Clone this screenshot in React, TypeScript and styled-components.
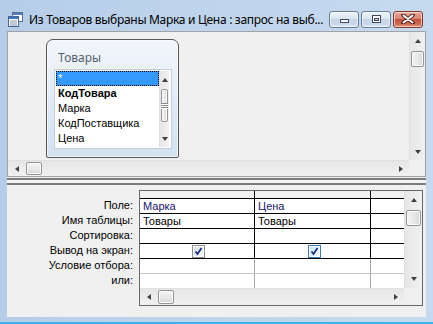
import React from "react";
import styled, { createGlobalStyle } from "styled-components";

const GlobalStyle = createGlobalStyle`
  html, body { margin: 0; padding: 0; }
  body { width: 433px; height: 324px; overflow: hidden; background: #bcd3ec; }
`;

const UI = `"Liberation Sans", Arial, sans-serif`;
const SEGOE = `"Noto Sans", "Open Sans", sans-serif`;

const Frame = styled.div`
  width: 433px;
  height: 324px;
  box-sizing: border-box;
  display: flex;
  flex-direction: column;
  padding: 0 7px 5px 7px;
  background: linear-gradient(90deg, #b6cde9 0%, #bed4ec 45%, #c6daef 100%);
  border-bottom: 2px solid #39b4e4;
`;

const TitleBar = styled.div`
  height: 31px;
  flex: 0 0 31px;
  display: flex;
  align-items: center;
  padding: 7px 3px 0 1px;
  box-sizing: border-box;
`;

const TitleText = styled.div`
  flex: 1;
  min-width: 0;
  margin-left: 6px;
  font: 12px ${SEGOE};
  letter-spacing: -0.3px;
  color: #000;
  white-space: nowrap;
  overflow: hidden;
`;

const CaptionGroup = styled.div`
  flex: 0 0 auto;
  display: flex;
  gap: 4px;
`;

const CaptionBtn = styled.div<{ $close?: boolean }>`
  flex: 0 0 30px;
  width: 30px;
  height: 17px;
  box-sizing: border-box;
  border-radius: 3px;
  display: flex;
  align-items: center;
  justify-content: center;
  border: 1px solid ${(p) => (p.$close ? "#84382f" : "#6a7d95")};
  box-shadow: inset 0 0 0 1px rgba(255, 255, 255, 0.55);
  background: ${(p) =>
    p.$close
      ? "linear-gradient(180deg, #e9a999 0%, #d98571 45%, #c5533c 50%, #cf6a52 80%, #e0947c 100%)"
      : "linear-gradient(180deg, #eef3f9 0%, #dbe5f1 45%, #c5d4e6 50%, #cbd9ea 80%, #dce7f3 100%)"};
  & + & { margin-left: ${(p) => (p.$close ? "-2px" : "0")}; }
`;

const Client = styled.div`
  flex: 1;
  display: flex;
  flex-direction: column;
  background: #f0f0f0;
`;

const UpperPane = styled.div`
  height: 146px;
  box-sizing: border-box;
  border: 1px solid #a3a3a3;
  display: grid;
  grid-template-columns: 1fr 16px;
  grid-template-rows: 1fr 16px;
  background: #f0f0f0;
`;

const Canvas = styled.div`
  padding: 7px 0 0 38px;
`;

const Corner = styled.div`
  background: #f0f0f0;
`;

const Splitter = styled.div`
  margin-top: 1px;
  height: 7px;
  box-sizing: border-box;
  border-top: 2px solid #7b7b7b;
  border-bottom: 2px solid #7b7b7b;
  background: #f4f4f4;
`;

const LowerPane = styled.div`
  flex: 1;
  display: flex;
  padding-top: 5px;
`;

const Labels = styled.div`
  width: 132px;
  box-sizing: border-box;
  padding: 9px 6px 0 0;
  display: flex;
  flex-direction: column;
`;

const Label = styled.div`
  height: 15px;
  line-height: 15px;
  text-align: right;
  font: 11px ${UI};
  color: #000;
  white-space: nowrap;
`;

const GridBox = styled.div`
  width: 284px;
  height: 116px;
  box-sizing: border-box;
  border: 1px solid #686868;
  display: grid;
  grid-template-columns: 264px 18px;
  grid-template-rows: 97px 17px;
  background: #f0f0f0;
`;

const Cells = styled.div`
  display: grid;
  grid-template-columns: 115px 116px 33px;
  grid-template-rows: 8px repeat(5, 15px) 14px;
  background: #fff;
`;

const Cell = styled.div<{ $head?: boolean; $dim?: boolean; $last?: boolean; $bottom?: boolean; $field?: boolean; $center?: boolean }>`
  box-sizing: border-box;
  background: ${(p) => (p.$head ? "#f0f0f0" : "#fff")};
  border-right: ${(p) => (p.$last ? "none" : `1px solid ${p.$dim ? "#a8a8a8" : "#000"}`)};
  border-bottom: ${(p) => (p.$bottom ? "none" : `1px solid ${p.$dim ? "#c4c4c4" : "#000"}`)};
  font: 11px ${UI};
  line-height: 14px;
  padding-left: 3px;
  color: ${(p) => (p.$field ? "#14146e" : "#000")};
  display: flex;
  align-items: center;
  justify-content: ${(p) => (p.$center ? "center" : "flex-start")};
  white-space: nowrap;
  overflow: hidden;
`;

const TableBox = styled.div`
  width: 133px;
  height: 119px;
  box-sizing: border-box;
  border: 1px solid #575757;
  border-radius: 7px 7px 2px 2px;
  box-shadow: inset 0 0 0 1px rgba(255, 255, 255, 0.6);
  background: linear-gradient(180deg, #f2f6fb 0%, #e4edf7 40%, #d3e1f1 100%);
  display: flex;
  flex-direction: column;
`;

const TableTitle = styled.div`
  height: 29px;
  box-sizing: border-box;
  padding: 10px 0 0 11px;
  font: 12px ${SEGOE};
  line-height: 16px;
  color: #58606b;
`;

const ListBox = styled.div`
  margin-left: 7px;
  width: 118px;
  height: 80px;
  box-sizing: border-box;
  border: 1px solid #c3cfdd;
  padding: 1px 2px 1px 1px;
  background: #fff;
  display: flex;
`;

const Items = styled.div`
  flex: 1;
  display: flex;
  flex-direction: column;
`;

const Item = styled.div<{ $selected?: boolean; $bold?: boolean }>`
  height: 15px;
  box-sizing: border-box;
  line-height: 13px;
  padding-left: 1px;
  font: ${(p) => (p.$bold ? "bold " : "")}11px ${UI};
  color: ${(p) => (p.$selected ? "#fff" : "#000")};
  background: ${(p) => (p.$selected ? "#3399ff" : "transparent")};
  border: 1px ${(p) => (p.$selected ? "dotted #000" : "solid transparent")};
  white-space: nowrap;
  overflow: hidden;
`;

/* scrollbars */

const Scroll = styled.div<{ $vertical?: boolean }>`
  display: flex;
  flex-direction: ${(p) => (p.$vertical ? "column" : "row")};
  background: ${(p) => (p.$vertical ? "linear-gradient(90deg, #e6e6e6, #f1f1f1)" : "linear-gradient(180deg, #e6e6e6, #f1f1f1)")};
  border-${(p) => (p.$vertical ? "left" : "top")}: 1px solid #e0e0e0;
  overflow: hidden;
`;

const ArrowBox = styled.div<{ $vertical?: boolean; $size: number }>`
  flex: 0 0 ${(p) => p.$size}px;
  display: flex;
  align-items: center;
  justify-content: center;
`;

const Tri = styled.span<{ $dir: "up" | "down" | "left" | "right" }>`
  width: 0;
  height: 0;
  border-style: solid;
  border-color: transparent;
  ${(p) =>
    p.$dir === "up"
      ? "border-width: 0 3.5px 4px 3.5px; border-bottom-color: #404040;"
      : p.$dir === "down"
      ? "border-width: 4px 3.5px 0 3.5px; border-top-color: #404040;"
      : p.$dir === "left"
      ? "border-width: 3.5px 4px 3.5px 0; border-right-color: #404040;"
      : "border-width: 3.5px 0 3.5px 4px; border-left-color: #404040;"}
`;

const Track = styled.div<{ $vertical?: boolean }>`
  flex: 1;
  display: flex;
  flex-direction: ${(p) => (p.$vertical ? "column" : "row")};
  align-items: center;
`;

const Thumb = styled.div<{ $vertical?: boolean; $offset: number; $length: number }>`
  box-sizing: border-box;
  ${(p) =>
    p.$vertical
      ? `margin-top: ${p.$offset}px; height: ${p.$length}px; width: calc(100% - 2px);`
      : `margin-left: ${p.$offset}px; width: ${p.$length}px; height: calc(100% - 2px);`}
  border: 1px solid #959595;
  border-radius: 2px;
  box-shadow: inset 0 0 0 1px #fafafa;
  background: ${(p) =>
    p.$vertical
      ? "linear-gradient(90deg, #f3f3f3 0%, #e9e9e9 50%, #d8d8d8 100%)"
      : "linear-gradient(180deg, #f3f3f3 0%, #e9e9e9 50%, #d8d8d8 100%)"};
  display: flex;
  flex-direction: column;
  align-items: center;
  justify-content: center;
  gap: 1px;
`;

const Grip = styled.span`
  width: 7px;
  height: 1px;
  background: #8a8a8a;
  box-shadow: 0 1px 0 #fff;
`;

type ScrollBarProps = {
  vertical?: boolean;
  arrow: number;
  offset: number;
  length: number;
  grip?: boolean;
};

const ScrollBar = ({ vertical, arrow, offset, length, grip }: ScrollBarProps) => (
  <Scroll $vertical={vertical}>
    <ArrowBox $vertical={vertical} $size={arrow}>
      <Tri $dir={vertical ? "up" : "left"} />
    </ArrowBox>
    <Track $vertical={vertical}>
      <Thumb $vertical={vertical} $offset={offset} $length={length}>
        {grip && (
          <>
            <Grip />
            <Grip />
            <Grip />
          </>
        )}
      </Thumb>
    </Track>
    <ArrowBox $vertical={vertical} $size={arrow}>
      <Tri $dir={vertical ? "down" : "right"} />
    </ArrowBox>
  </Scroll>
);

const QueryIcon = () => (
  <svg width="15" height="15" viewBox="0 0 15 15" style={{ flex: "0 0 15px" }}>
    <rect x="4.5" y="0.5" width="10" height="9" fill="#fff" stroke="#5a6f8e" />
    <rect x="5" y="1" width="9" height="2" fill="#4f7fc0" />
    <rect x="0.5" y="4.5" width="10" height="10" fill="#fff" stroke="#4a6690" />
    <rect x="1" y="5" width="9" height="2" fill="#3f73bd" />
    <line x1="2" y1="9" x2="9" y2="9" stroke="#7d93b3" />
    <line x1="2" y1="11" x2="9" y2="11" stroke="#7d93b3" />
    <line x1="2" y1="13" x2="9" y2="13" stroke="#7d93b3" />
  </svg>
);

const MinGlyph = () => (
  <svg width="11" height="9" viewBox="0 0 11 9">
    <rect x="1.5" y="4.5" width="8" height="3" fill="#fff" stroke="#3d4a5c" />
  </svg>
);

const RestoreGlyph = () => (
  <svg width="11" height="9" viewBox="0 0 11 9">
    <rect x="1.5" y="0.5" width="8" height="7" fill="#fff" stroke="#3d4a5c" />
    <rect x="3.5" y="3.5" width="4" height="2" fill="#d3dded" stroke="#3d4a5c" />
  </svg>
);

const CloseGlyph = () => (
  <svg width="14" height="10" viewBox="0 0 14 10">
    <path d="M2 1 L12 9 M12 1 L2 9" stroke="#4a1c16" strokeWidth="3.6" strokeLinecap="round" />
    <path d="M2.5 1.5 L11.5 8.5 M11.5 1.5 L2.5 8.5" stroke="#fff" strokeWidth="2" strokeLinecap="round" />
  </svg>
);

const Check = ({ focused }: { focused?: boolean }) => (
  <svg width="13" height="13" viewBox="0 0 13 13">
    <defs>
      <linearGradient id={focused ? "cbf" : "cb"} x1="0" y1="0" x2="1" y2="1">
        <stop offset="0" stopColor={focused ? "#c9e3f7" : "#d6dde6"} />
        <stop offset="1" stopColor={focused ? "#f2f8fd" : "#f6f7f9"} />
      </linearGradient>
    </defs>
    <rect x="0.5" y="0.5" width="12" height="12" fill="#fff" stroke={focused ? "#3c7fb1" : "#8e8f8f"} />
    <rect x="2" y="2" width="9" height="9" fill={`url(#${focused ? "cbf" : "cb"})`} />
    <path d="M3.5 6.5 L5.5 9 L9.5 3" fill="none" stroke="#1f2f86" strokeWidth="1.8" />
  </svg>
);

const fields = ["*", "КодТовара", "Марка", "КодПоставщика", "Цена"];
const labels = ["Поле:", "Имя таблицы:", "Сортировка:", "Вывод на экран:", "Условие отбора:", "или:"];

export default function App() {
  const rows: { a: React.ReactNode; b: React.ReactNode; field?: boolean; center?: boolean }[] = [
    { a: "Марка", b: "Цена", field: true },
    { a: "Товары", b: "Товары" },
    { a: "", b: "" },
    { a: <Check />, b: <Check focused />, center: true },
    { a: "", b: "" },
    { a: "", b: "" },
  ];

  return (
    <>
      <GlobalStyle />
      <Frame>
        <TitleBar>
          <QueryIcon />
          <TitleText>Из Товаров выбраны Марка и Цена : запрос на выб...</TitleText>
          <CaptionGroup>
            <CaptionBtn>
              <MinGlyph />
            </CaptionBtn>
            <CaptionBtn>
              <RestoreGlyph />
            </CaptionBtn>
            <CaptionBtn $close>
              <CloseGlyph />
            </CaptionBtn>
          </CaptionGroup>
        </TitleBar>

        <Client>
          <UpperPane>
            <Canvas>
              <TableBox>
                <TableTitle>Товары</TableTitle>
                <ListBox>
                  <Items>
                    {fields.map((f, i) => (
                      <Item key={f} $selected={i === 0} $bold={i === 1}>
                        {f}
                      </Item>
                    ))}
                  </Items>
                  <ScrollBar vertical arrow={17} offset={1} length={33} grip />
                </ListBox>
              </TableBox>
            </Canvas>
            <ScrollBar vertical arrow={17} offset={2} length={16} />
            <ScrollBar arrow={17} offset={1} length={16} />
            <Corner />
          </UpperPane>

          <Splitter />

          <LowerPane>
            <Labels>
              {labels.map((l) => (
                <Label key={l}>{l}</Label>
              ))}
            </Labels>
            <GridBox>
              <Cells>
                <Cell $head />
                <Cell $head />
                <Cell $head $last />
                {rows.map((r, i) => {
                  const dim = i >= 4;
                  const bottom = i === rows.length - 1;
                  return (
                    <React.Fragment key={i}>
                      <Cell $dim={dim} $bottom={bottom} $field={r.field} $center={r.center}>
                        {r.a}
                      </Cell>
                      <Cell $dim={dim} $bottom={bottom} $field={r.field} $center={r.center}>
                        {r.b}
                      </Cell>
                      <Cell $dim={dim} $bottom={bottom} $last />
                    </React.Fragment>
                  );
                })}
              </Cells>
              <ScrollBar vertical arrow={18} offset={1} length={16} />
              <ScrollBar arrow={17} offset={1} length={16} />
              <Corner />
            </GridBox>
          </LowerPane>
        </Client>
      </Frame>
    </>
  );
}
